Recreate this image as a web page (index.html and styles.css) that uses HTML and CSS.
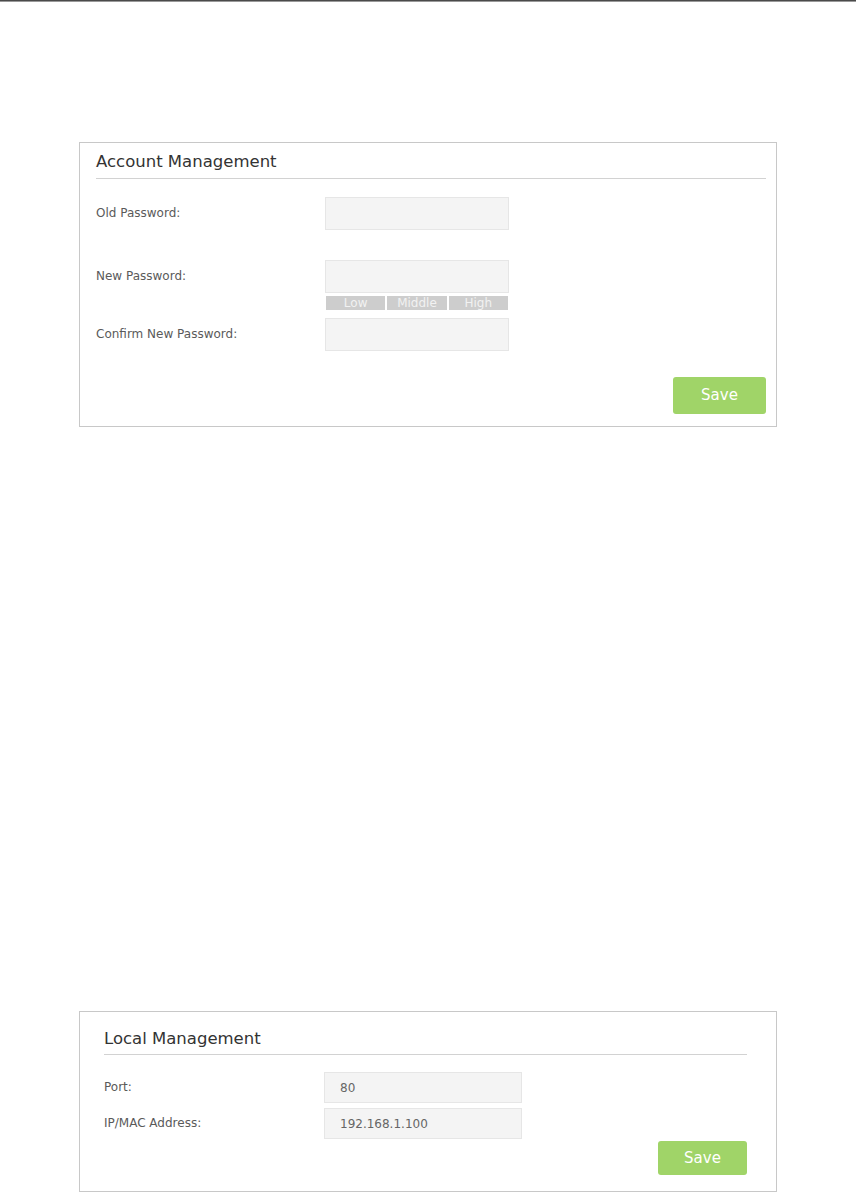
FILE: index.html
```html
<!DOCTYPE html>
<html>
<head>
    <meta charset="utf-8">
    <title>Management</title>
    <link rel="stylesheet" href="styles.css">
</head>
<body>
<div class="topline"></div>

<div class="panel account">
    <h3 class="title">Account Management</h3>
    <div class="row first">
        <label class="lbl">Old Password:</label>
        <div class="field"><input class="txt" type="password"></div>
    </div>
    <div class="row second">
        <label class="lbl">New Password:</label>
        <div class="field">
            <input class="txt" type="password">
            <div class="strength"><span>Low</span><span>Middle</span><span>High</span></div>
        </div>
    </div>
    <div class="row third">
        <label class="lbl">Confirm New Password:</label>
        <div class="field"><input class="txt" type="password"></div>
    </div>
    <div class="btns"><a class="save">Save</a></div>
</div>

<div class="panel local">
    <h3 class="title">Local Management</h3>
    <div class="row">
        <label class="lbl">Port:</label>
        <div class="field"><input class="txt" type="text" value="80"></div>
    </div>
    <div class="row">
        <label class="lbl">IP/MAC Address:</label>
        <div class="field"><input class="txt" type="text" value="192.168.1.100"></div>
    </div>
    <div class="btns"><a class="save">Save</a></div>
</div>
</body>
</html>
```

FILE: styles.css
```css
*{ margin:0; padding:0; box-sizing:border-box }
body{
    background:#fff;
    font-family:"DejaVu Sans", Verdana, sans-serif;
    color:#555;
}
.topline{ height:2px; background:#4a4a4a; border-bottom:1px solid #999 }

.panel{
    width:698px; margin-left:79px;
    border:1px solid #c8c8c8;
}
.title{
    font-size:16.5px; font-weight:normal; line-height:20px;
    color:#333;
    border-bottom:1px solid #d2d2d2;
}
.row{ display:flex; align-items:flex-start }
.lbl{ font-size:12px; color:#5a5a5a }
.field{ display:flex; flex-direction:column }
.txt{
    display:block;
    background:#f4f4f4; border:1px solid #e6e6e6;
    font-family:"DejaVu Sans", Verdana, sans-serif;
    font-size:12px; color:#666;
    outline:none;
}
.btns{ display:flex; justify-content:flex-end }
.save{
    display:block;
    background:#a0d468; border-radius:3px;
    color:#fff; font-size:15px; text-align:center;
    cursor:pointer;
}

/* account */
.account{ margin-top:140px; padding:9px 10px 12px 16px }
.account .title{ padding-bottom:6px }
.account .lbl{ width:229px; line-height:33px }
.account .txt{ width:184px; height:33px; padding:0 10px }
.account .first{ margin-top:18px }
.account .second{ margin-top:30px }
.account .third{ margin-top:8px }
.strength{ display:flex; gap:2px; margin-top:3px; padding:0 1px }
.strength span{
    flex:1; height:14px; line-height:14px;
    background:#cdcdcd; color:#f2f2f2;
    font-size:12px; text-align:center;
}
.account .btns{ margin-top:26px }
.account .save{ width:93px; height:37px; line-height:37px }

/* local */
.local{ margin-top:584px; padding:17px 29px 16px 24px }
.local .title{ padding-bottom:5px }
.local .row{ margin-top:5px }
.local .title + .row{ margin-top:17px }
.local .lbl{ width:220px; line-height:31px }
.local .txt{ width:198px; height:31px; padding:0 15px }
.local .btns{ margin-top:2px }
.local .save{ width:89px; height:34px; line-height:34px }
```
